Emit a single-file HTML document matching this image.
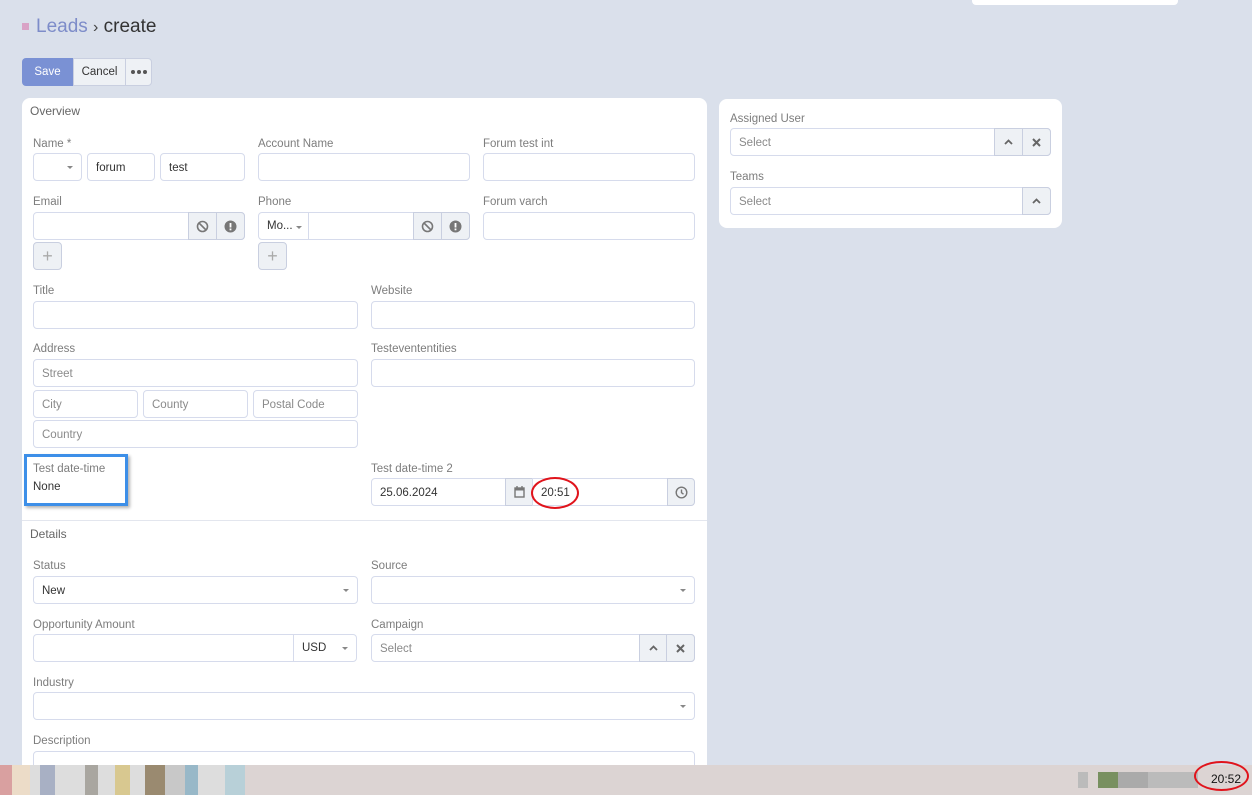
<!DOCTYPE html>
<html><head><meta charset="utf-8"><style>
*{box-sizing:border-box;margin:0;padding:0}
body{width:1252px;height:795px;overflow:hidden;background:#dae0eb;font-family:"Liberation Sans",sans-serif;font-size:11.5px;color:#333;position:relative}
.a{position:absolute}
.lbl{position:absolute;color:#7d7d7d;font-size:11.5px;margin-top:1px}
.in{position:absolute;height:28px;background:#fff;border:1px solid #d6dbec;border-radius:4px;color:#333;padding:0 8px;line-height:28px;font-size:11.5px}
.ph{color:#8a8a8a}
.btn{position:absolute;height:28px;background:#eef1f5;border:1px solid #c9cfe0;display:flex;align-items:center;justify-content:center;color:#777}
.caret{position:absolute;right:8px;top:12px;width:0;height:0;border-left:3px solid transparent;border-right:3px solid transparent;border-top:3px solid #888}
.panel{position:absolute;background:#fff;border-radius:8px}
</style></head><body>
<div class="a" style="left:972px;top:0;width:206px;height:5px;background:#fff;border-radius:0 0 4px 4px"></div>
<div class="a" style="left:22px;top:23px;width:7px;height:7px;background:#d9a3c6"></div>
<div class="a" style="left:36px;top:16px;font-size:19px;color:#7d8cc9">Leads <span style="color:#444;font-size:16px">›</span> <span style="color:#333">create</span></div>
<div class="a" style="left:22px;top:58px;width:51px;height:28px;background:#7a91d4;border-radius:4px 0 0 4px;color:#fff;line-height:28px;text-align:center;font-size:11.5px">Save</div>
<div class="a" style="left:73px;top:58px;width:53px;height:28px;background:#eef1f5;border:1px solid #c9cfe0;line-height:27px;text-align:center;color:#333">Cancel</div>
<div class="a" style="left:125px;top:58px;width:27px;height:28px;background:#eef1f5;border:1px solid #c9cfe0;border-radius:0 4px 4px 0;display:flex;align-items:center;justify-content:center;gap:2px"><i style="width:4px;height:4px;border-radius:50%;background:#555"></i><i style="width:4px;height:4px;border-radius:50%;background:#555"></i><i style="width:4px;height:4px;border-radius:50%;background:#555"></i></div>

<div class="panel" style="left:22px;top:98px;width:685px;height:690px"></div>
<div class="lbl" style="left:30px;top:103px;color:#666;font-size:12px">Overview</div>

<div class="lbl" style="left:33px;top:137px">Name *</div>
<div class="in" style="left:33px;top:153px;width:49px"><span class="caret"></span></div>
<div class="in" style="left:87px;top:153px;width:68px">forum</div>
<div class="in" style="left:160px;top:153px;width:85px">test</div>
<div class="lbl" style="left:258px;top:137px">Account Name</div>
<div class="in" style="left:258px;top:153px;width:212px"></div>
<div class="lbl" style="left:483px;top:137px">Forum test int</div>
<div class="in" style="left:483px;top:153px;width:212px"></div>

<div class="lbl" style="left:33px;top:195px">Email</div>
<div class="in" style="left:33px;top:212px;width:212px"></div>
<div class="btn" style="left:188px;top:212px;width:29px"><svg width="13" height="13" viewBox="0 0 13 13"><circle cx="6.5" cy="6.5" r="5" fill="none" stroke="#777" stroke-width="1.6"/><path d="M3 3l7 7" stroke="#777" stroke-width="1.6"/></svg></div>
<div class="btn" style="left:216px;top:212px;width:29px;border-radius:0 4px 4px 0"><svg width="13" height="13" viewBox="0 0 13 13"><circle cx="6.5" cy="6.5" r="6" fill="#777"/><rect x="5.6" y="3" width="1.8" height="4.5" fill="#fff"/><rect x="5.6" y="8.5" width="1.8" height="1.8" fill="#fff"/></svg></div>
<div class="btn" style="left:33px;top:242px;width:29px;border-radius:4px;font-size:18px;color:#aaa">+</div>
<div class="lbl" style="left:258px;top:195px">Phone</div>
<div class="in" style="left:258px;top:212px;width:212px"></div>
<div class="a" style="left:267px;top:220px;color:#333">Mo...</div>
<div class="a" style="left:296px;top:226px;border-left:3px solid transparent;border-right:3px solid transparent;border-top:3px solid #888"></div>
<div class="a" style="left:308px;top:213px;width:1px;height:26px;background:#d6dbec"></div>
<div class="btn" style="left:413px;top:212px;width:29px"><svg width="13" height="13" viewBox="0 0 13 13"><circle cx="6.5" cy="6.5" r="5" fill="none" stroke="#777" stroke-width="1.6"/><path d="M3 3l7 7" stroke="#777" stroke-width="1.6"/></svg></div>
<div class="btn" style="left:441px;top:212px;width:29px;border-radius:0 4px 4px 0"><svg width="13" height="13" viewBox="0 0 13 13"><circle cx="6.5" cy="6.5" r="6" fill="#777"/><rect x="5.6" y="3" width="1.8" height="4.5" fill="#fff"/><rect x="5.6" y="8.5" width="1.8" height="1.8" fill="#fff"/></svg></div>
<div class="btn" style="left:258px;top:242px;width:29px;border-radius:4px;font-size:18px;color:#aaa">+</div>
<div class="lbl" style="left:483px;top:195px">Forum varch</div>
<div class="in" style="left:483px;top:212px;width:212px"></div>

<div class="lbl" style="left:33px;top:284px">Title</div>
<div class="in" style="left:33px;top:301px;width:325px"></div>
<div class="lbl" style="left:371px;top:284px">Website</div>
<div class="in" style="left:371px;top:301px;width:324px"></div>

<div class="lbl" style="left:33px;top:342px">Address</div>
<div class="in ph" style="left:33px;top:359px;width:325px">Street</div>
<div class="in ph" style="left:33px;top:390px;width:105px">City</div>
<div class="in ph" style="left:143px;top:390px;width:105px">County</div>
<div class="in ph" style="left:253px;top:390px;width:105px">Postal Code</div>
<div class="in ph" style="left:33px;top:420px;width:325px">Country</div>
<div class="lbl" style="left:371px;top:342px">Testevententities</div>
<div class="in" style="left:371px;top:359px;width:324px"></div>

<div class="a" style="left:24px;top:454px;width:104px;height:52px;border:3px solid #3d8fe8;box-shadow:2px 2px 3px rgba(0,0,0,.3)"></div>
<div class="lbl" style="left:33px;top:462px">Test date-time</div>
<div class="a" style="left:33px;top:481px">None</div>
<div class="lbl" style="left:371px;top:462px">Test date-time 2</div>
<div class="in" style="left:371px;top:478px;width:135px;border-radius:4px 0 0 4px">25.06.2024</div>
<div class="btn" style="left:505px;top:478px;width:28px"><svg width="11" height="12" viewBox="0 0 11 12"><rect x="1" y="2" width="9" height="9" fill="none" stroke="#777" stroke-width="1.4"/><rect x="1" y="2" width="9" height="2.5" fill="#777"/><path d="M3 0v3M8 0v3" stroke="#777" stroke-width="1.4"/></svg></div>
<div class="in" style="left:532px;top:478px;width:136px;border-radius:0">20:51</div>
<div class="btn" style="left:667px;top:478px;width:28px;border-radius:0 4px 4px 0"><svg width="13" height="13" viewBox="0 0 13 13"><circle cx="6.5" cy="6.5" r="5.3" fill="none" stroke="#777" stroke-width="1.4"/><path d="M6.5 3.5v3.2l2 1.5" fill="none" stroke="#777" stroke-width="1.4"/></svg></div>
<div class="a" style="left:531px;top:477px;width:48px;height:32px;border:2px solid #e0141c;border-radius:50%"></div>

<div class="a" style="left:22px;top:520px;width:685px;height:1px;background:#e3e6ee"></div>
<div class="lbl" style="left:30px;top:526px;color:#666;font-size:12px">Details</div>
<div class="lbl" style="left:33px;top:559px">Status</div>
<div class="in" style="left:33px;top:576px;width:325px">New<span class="caret"></span></div>
<div class="lbl" style="left:371px;top:559px">Source</div>
<div class="in" style="left:371px;top:576px;width:324px"><span class="caret"></span></div>
<div class="lbl" style="left:33px;top:618px">Opportunity Amount</div>
<div class="in" style="left:33px;top:634px;width:324px"></div>
<div class="a" style="left:293px;top:635px;width:1px;height:26px;background:#d6dbec"></div>
<div class="a" style="left:302px;top:642px">USD</div>
<div class="a" style="left:342px;top:647px;border-left:3px solid transparent;border-right:3px solid transparent;border-top:3px solid #888"></div>
<div class="lbl" style="left:371px;top:618px">Campaign</div>
<div class="in ph" style="left:371px;top:634px;width:324px">Select</div>
<div class="btn" style="left:639px;top:634px;width:28px"><svg width="9" height="6" viewBox="0 0 9 6"><path d="M1 5l3.5-3.5L8 5" fill="none" stroke="#666" stroke-width="1.8"/></svg></div>
<div class="btn" style="left:666px;top:634px;width:29px;border-radius:0 4px 4px 0"><svg width="9" height="9" viewBox="0 0 9 9"><path d="M1 1l7 7M8 1l-7 7" stroke="#666" stroke-width="2"/></svg></div>
<div class="lbl" style="left:33px;top:676px">Industry</div>
<div class="in" style="left:33px;top:692px;width:662px"><span class="caret"></span></div>
<div class="lbl" style="left:33px;top:734px">Description</div>
<div class="in" style="left:33px;top:751px;width:662px;height:40px"></div>

<div class="panel" style="left:719px;top:99px;width:343px;height:129px"></div>
<div class="lbl" style="left:730px;top:112px">Assigned User</div>
<div class="in ph" style="left:730px;top:128px;width:321px">Select</div>
<div class="btn" style="left:994px;top:128px;width:29px"><svg width="9" height="6" viewBox="0 0 9 6"><path d="M1 5l3.5-3.5L8 5" fill="none" stroke="#666" stroke-width="1.8"/></svg></div>
<div class="btn" style="left:1022px;top:128px;width:29px;border-radius:0 4px 4px 0"><svg width="9" height="9" viewBox="0 0 9 9"><path d="M1 1l7 7M8 1l-7 7" stroke="#666" stroke-width="2"/></svg></div>
<div class="lbl" style="left:730px;top:170px">Teams</div>
<div class="in ph" style="left:730px;top:187px;width:321px">Select</div>
<div class="btn" style="left:1022px;top:187px;width:29px;border-radius:0 4px 4px 0"><svg width="9" height="6" viewBox="0 0 9 6"><path d="M1 5l3.5-3.5L8 5" fill="none" stroke="#666" stroke-width="1.8"/></svg></div>

<div class="a" style="left:0;top:765px;width:1252px;height:30px;background:#dcd4d3"></div>
<div class="a" style="left:0;top:765px;width:250px;height:30px;background:linear-gradient(90deg,#d9a0a0 0 12px,#ecdcc8 12px 30px,#ddd 30px 40px,#a8b0c4 40px 55px,#ddd 55px 85px,#a9a6a0 85px 98px,#ddd 98px 115px,#d8c890 115px 130px,#ddd 130px 145px,#9a8a70 145px 165px,#c8c8c8 165px 185px,#98b8c8 185px 198px,#ddd 198px 225px,#b8d0d8 225px 245px,#dcd4d3 245px)"></div>
<div class="a" style="left:1078px;top:772px;width:120px;height:16px;background:linear-gradient(90deg,#bbb 0 10px,#dcd4d3 10px 20px,#789060 20px 40px,#aaa 40px 70px,#bbb 70px 120px)"></div>
<div class="a" style="left:1211px;top:772px;color:#111;font-size:12px">20:52</div>
<div class="a" style="left:1194px;top:761px;width:55px;height:30px;border:2px solid #e0141c;border-radius:50%"></div>
</body></html>
